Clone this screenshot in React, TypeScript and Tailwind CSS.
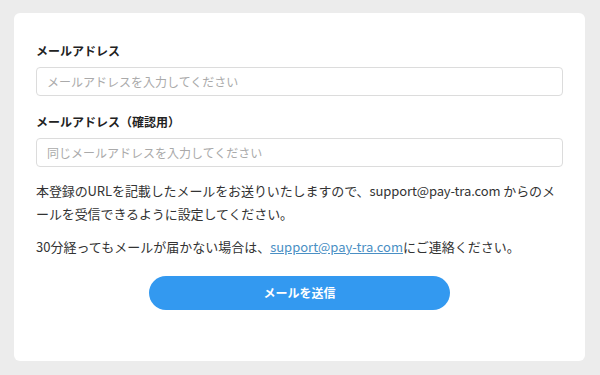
export default function App() {
  return (
    <div
      className="min-h-[375px] w-[600px] bg-[#ececec] pt-[13px] pl-[14px]"
      style={{ fontFamily: '"Noto Sans CJK JP", "Noto Sans", sans-serif' }}
    >
      <div className="w-[571px] h-[348px] bg-white rounded-[6px] px-[22px] pt-[28px] text-[#333]">
        {/* メールアドレス */}
        <label className="block text-[12px] font-bold leading-[20px] text-[#222]">メールアドレス</label>
        <input
          type="text"
          placeholder="メールアドレスを入力してください"
          className="mt-[6px] block w-[527px] h-[29px] rounded-[4px] border border-[#dcdcdc] px-[10px] text-[12px] placeholder:text-[#aaa] outline-none"
        />

        <label className="block mt-[16px] text-[12px] font-bold leading-[20px] text-[#222]">
          メールアドレス（確認用）
        </label>
        <input
          type="text"
          placeholder="同じメールアドレスを入力してください"
          className="mt-[6px] block w-[527px] h-[29px] rounded-[4px] border border-[#dcdcdc] px-[10px] text-[12px] placeholder:text-[#aaa] outline-none"
        />

        <p className="mt-[12px] text-[13px] leading-[23px] tracking-[-0.1px]">
          本登録のURLを記載したメールをお送りいたしますので、support@pay-tra.com からのメールを受信できるように設定してください。
        </p>
        <p className="mt-[10px] text-[13px] leading-[23px]">
          30分経ってもメールが届かない場合は、
          <a href="#" className="text-[#4a8fc4] underline">support@pay-tra.com</a>
          にご連絡ください。
        </p>

        <div className="flex justify-center mt-[18px]">
          <button className="w-[301px] h-[34px] rounded-full bg-[#3399f0] text-white text-[12px] font-bold">
            メールを送信
          </button>
        </div>
      </div>
    </div>
  );
}
